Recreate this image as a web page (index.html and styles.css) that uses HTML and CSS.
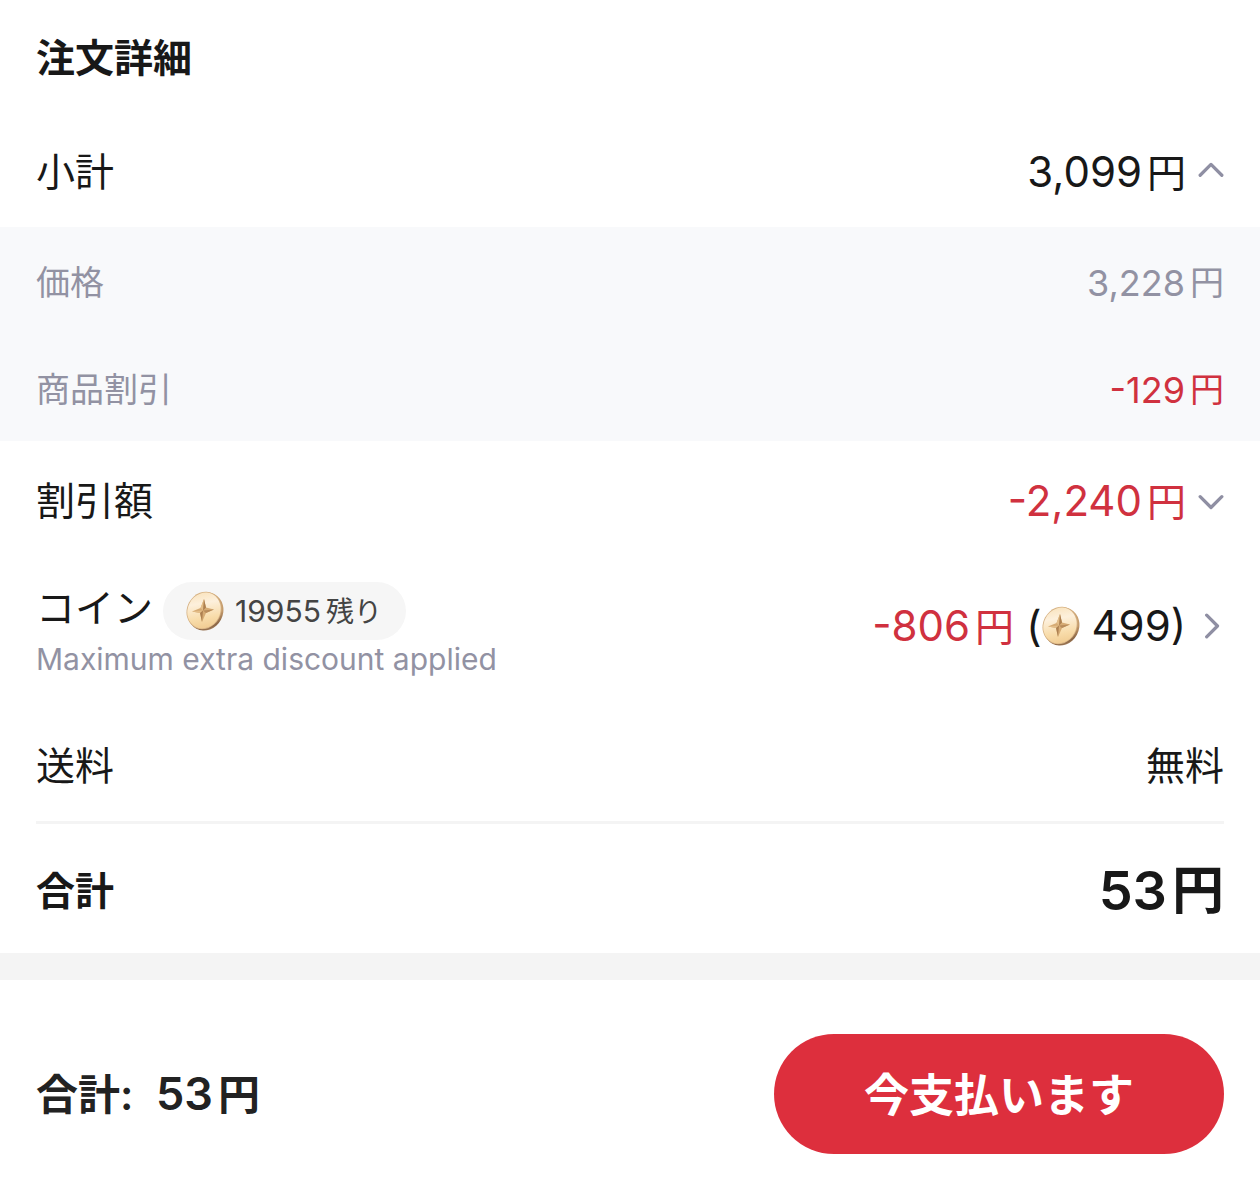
FILE: index.html
```html
<!DOCTYPE html>
<html lang="ja">

<head>
    <meta charset="UTF-8">
    <meta name="viewport" content="width=device-width, initial-scale=1.0">
    <title>注文詳細</title>
    <link rel="stylesheet" href="styles.css">
</head>

<body>
    <!-- Shared coin artwork -->
    <svg class="defs" width="0" height="0" aria-hidden="true">
        <defs>
            <linearGradient id="coin-edge" x1="0" y1="0" x2="1" y2="1">
                <stop offset="0" stop-color="#d9b483"/>
                <stop offset="0.6" stop-color="#c39a6c"/>
                <stop offset="0.8" stop-color="#8a6545"/>
                <stop offset="1" stop-color="#d8b58a"/>
            </linearGradient>
            <linearGradient id="coin-face" x1="0.1" y1="0" x2="0.8" y2="1">
                <stop offset="0" stop-color="#f8dfb4"/>
                <stop offset="0.35" stop-color="#fdf0dc"/>
                <stop offset="0.7" stop-color="#f8dcaa"/>
                <stop offset="1" stop-color="#efc88c"/>
            </linearGradient>
            <symbol id="coin" viewBox="0 0 40 40">
                <ellipse cx="20.5" cy="20.5" rx="17.5" ry="19.5" transform="rotate(28 20.5 20.5)" fill="url(#coin-edge)"/>
                <ellipse cx="19" cy="19.5" rx="17" ry="19.2" transform="rotate(28 19 19.5)" fill="#d6b284"/>
                <ellipse cx="19" cy="19.5" rx="16.2" ry="18.4" transform="rotate(28 19 19.5)" fill="url(#coin-face)"/>
                <path d="M19 8 L21 16.5 L29 18.5 L21 22 L17 31 L15 22 L7 20.5 L15.5 17 Z" fill="#d6ab74"/>
                <path d="M19 8 L18 19.5 L15.5 17 Z M7 20.5 L18 19.5 L15 22 Z" fill="#e3bd88"/>
                <path d="M19 8 L21 16.5 L18 19.5 Z M17 31 L15 22 L18 19.5 Z" fill="#ad8051"/>
                <path d="M29 18.5 L21 22 L18 19.5 Z" fill="#b98c5b"/>
            </symbol>
        </defs>
    </svg>

    <main class="order">
        <h1 class="title">注文詳細</h1>

        <div class="row">
            <span class="label">小計</span>
            <button class="value" aria-expanded="true">
                <span>3,099<span class="yen">円</span></span>
                <svg class="chevron" viewBox="0 0 24 24"><path d="M2 15 L12 5 L22 15"/></svg>
            </button>
        </div>

        <div class="breakdown">
            <div class="row sub">
                <span class="label">価格</span>
                <span class="value">3,228<span class="yen">円</span></span>
            </div>
            <div class="row sub">
                <span class="label">商品割引</span>
                <span class="value red">-129<span class="yen">円</span></span>
            </div>
        </div>

        <div class="row discount">
            <span class="label">割引額</span>
            <button class="value" aria-expanded="false">
                <span class="red">-2,240<span class="yen">円</span></span>
                <svg class="chevron" viewBox="0 0 24 24"><path d="M2 8 L12 18 L22 8"/></svg>
            </button>
        </div>

        <div class="row coins">
            <div class="coin-info">
                <div class="coin-head">
                    <span class="label">コイン</span>
                    <span class="pill">
                        <svg class="coin"><use href="#coin"/></svg>
                        <span>19955<span class="yen">残り</span></span>
                    </span>
                </div>
                <p class="note">Maximum extra discount applied</p>
            </div>
            <button class="value">
                <span class="red">-806<span class="yen">円</span></span>
                <span class="coin-used">(<svg class="coin"><use href="#coin"/></svg><span class="coin-count">499)</span></span>
                <svg class="chevron" viewBox="0 0 24 24"><path d="M8 2 L18 12 L8 22"/></svg>
            </button>
        </div>

        <div class="row">
            <span class="label">送料</span>
            <span class="label">無料</span>
        </div>

        <div class="row total">
            <span class="label">合計</span>
            <span class="value">53<span class="yen">円</span></span>
        </div>
    </main>

    <footer class="checkout">
        <p class="checkout-total">合計: <span class="sum">53<span class="yen">円</span></span></p>
        <button class="pay">今支払います</button>
    </footer>
</body>

</html>
```
FILE: styles.css
```css
* {
    margin: 0;
    padding: 0;
    box-sizing: border-box;
}

body {
    background-color: #fff;
    color: #181818;
    font-family: Inter, "Noto Sans CJK JP", sans-serif;
}

button {
    border: none;
    background: none;
    color: inherit;
    font-family: inherit;
    cursor: pointer;
}

.defs {
    position: absolute;
}

.title {
    padding: 38px 36px 39px;
    font-size: 39px;
    line-height: 40px;
    font-weight: 700;
}

.row {
    display: flex;
    justify-content: space-between;
    align-items: center;
    min-height: 110px;
    padding: 0 36px;
}

.label {
    font-size: 39px;
    line-height: 56px;
}

.value {
    display: flex;
    align-items: center;
    gap: 12px;
    font-size: 42px;
    line-height: 56px;
}

.yen {
    margin-left: 5px;
    font-size: 39px;
    line-height: 1;
}

.red {
    color: #d0313f;
}

.chevron {
    width: 26px;
    height: 26px;
    fill: none;
    stroke: #8f8fa3;
    stroke-width: 3;
    stroke-linecap: round;
    stroke-linejoin: round;
}

.breakdown {
    background-color: #f8f9fb;
}

.sub {
    min-height: 107px;
    padding-top: 4px;
    color: #9292a3;
}

.sub .label {
    font-size: 34px;
}

.sub .value {
    gap: 0;
    font-size: 36px;
}

.sub .yen {
    font-size: 34px;
}

.discount {
    min-height: 120px;
}

.coins {
    align-items: flex-start;
    min-height: 150px;
    padding-top: 21px;
}

.coins .value {
    margin-top: 16px;
}

.coin-head {
    display: flex;
    align-items: flex-start;
    gap: 10px;
}

.coin-head .label {
    line-height: 52px;
}

.pill {
    display: flex;
    align-items: center;
    gap: 10px;
    padding: 0 24px 0 22px;
    border-radius: 29px;
    background-color: #f6f6f6;
    color: #444;
    font-size: 30px;
    line-height: 58px;
}

.pill .yen {
    font-size: 28px;
}

.note {
    color: #9292a3;
    font-size: 30px;
    line-height: 38px;
}

.coin {
    width: 40px;
    height: 40px;
}

.coin-used {
    display: flex;
    align-items: center;
}

.coin-count {
    margin-left: 10px;
}

.total {
    min-height: 132px;
    margin: 0 36px;
    padding: 4px 0 0;
    border-top: 3px solid #f4f4f4;
    font-weight: 600;
}

.total .value {
    gap: 0;
    font-size: 54px;
}

.total .yen {
    font-size: 52px;
}

.checkout {
    display: flex;
    justify-content: space-between;
    align-items: center;
    padding: 54px 36px 36px;
    border-top: 27px solid #f4f4f4;
}

.checkout-total {
    color: #222;
    font-size: 42px;
    line-height: 56px;
    font-weight: 600;
}

.sum {
    margin-left: 12px;
    font-size: 45px;
}

.sum .yen {
    font-size: 42px;
}

.pay {
    width: 450px;
    height: 120px;
    padding-bottom: 4px;
    border-radius: 60px;
    background-color: #dd2f3d;
    color: #fff;
    font-size: 45px;
    font-weight: 600;
}
```
